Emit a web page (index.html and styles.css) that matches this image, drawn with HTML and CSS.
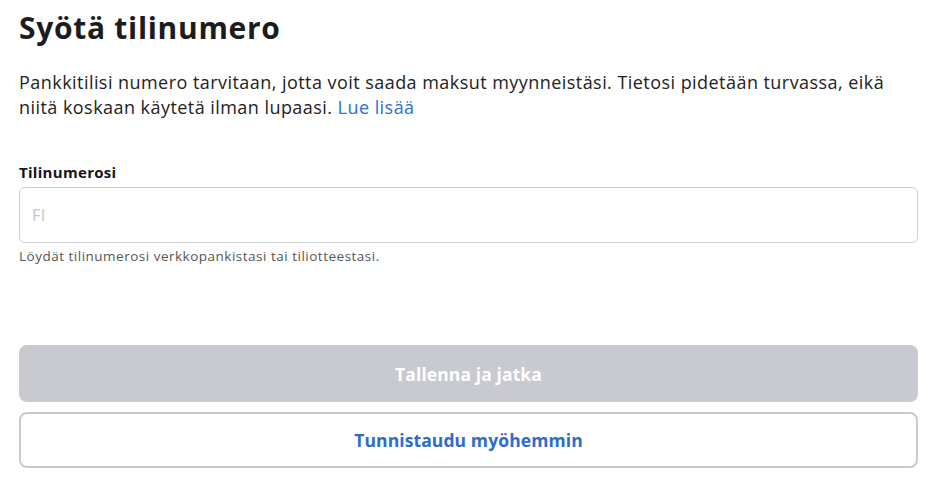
FILE: index.html
```html
<!DOCTYPE html>
<html lang="fi">
<head>
<meta charset="utf-8">
<link rel="stylesheet" href="styles.css">
</head>
<body>
<main class="page">
  <h1 class="title">Syötä tilinumero</h1>
  <p class="intro">Pankkitilisi numero tarvitaan, jotta voit saada maksut myynneistäsi. Tietosi pidetään turvassa, eikä niitä koskaan käytetä ilman lupaasi. <a class="link" href="#">Lue lisää</a></p>
  <div class="field">
    <label class="label" for="iban">Tilinumerosi</label>
    <input class="input" id="iban" type="text" placeholder="FI">
    <div class="hint">Löydät tilinumerosi verkkopankistasi tai tiliotteestasi.</div>
  </div>
  <div class="actions">
    <button class="btn btn-primary" disabled>Tallenna ja jatka</button>
    <button class="btn btn-secondary">Tunnistaudu myöhemmin</button>
  </div>
</main>
</body>
</html>
```
FILE: styles.css
```css
* { box-sizing: border-box; }
html, body { margin: 0; background: #fff; }
body {
  font-family: "Open Sans", "Noto Sans", sans-serif;
  color: #1c1c1f;
}
.page {
  padding: 8px 17px 0 19px;
  display: flex;
  flex-direction: column;
}
.title {
  margin: 0;
  font-size: 30px;
  line-height: 40px;
  font-weight: 700;
  letter-spacing: 0.7px;
}
.intro {
  margin: 22px 0 0;
  font-size: 18px;
  line-height: 25px;
  font-weight: 400;
  letter-spacing: 0.45px;
  color: #222;
}
.link { color: #2a6fd4; text-decoration: none; }
.field {
  margin-top: 42px;
  display: flex;
  flex-direction: column;
}
.label {
  font-size: 15px;
  line-height: 20px;
  font-weight: 700;
  letter-spacing: 0.3px;
  margin-bottom: 5px;
  color: #151518;
}
.input {
  height: 56px;
  border: 1px solid #cfd0d4;
  border-radius: 6px;
  padding: 0 12px;
  font-family: inherit;
  font-size: 16px;
  letter-spacing: 0.4px;
  outline: none;
}
.input::placeholder { color: #c2c3c7; }
.hint {
  margin-top: 4px;
  font-size: 13.5px;
  line-height: 18px;
  letter-spacing: 0.5px;
  color: #555;
}
.actions {
  margin-top: 80px;
  display: flex;
  flex-direction: column;
  gap: 10px;
}
.btn {
  height: 57px;
  border-radius: 8px;
  font-family: inherit;
  font-size: 17.5px;
  font-weight: 700;
  letter-spacing: 0.1px;
}
.btn-primary {
  background: #c9cacf;
  border: none;
  color: #fff;
}
.btn-secondary {
  height: 56px;
  background: #fff;
  border: 2px solid #c9cacf;
  color: #2f6bc9;
}
```
